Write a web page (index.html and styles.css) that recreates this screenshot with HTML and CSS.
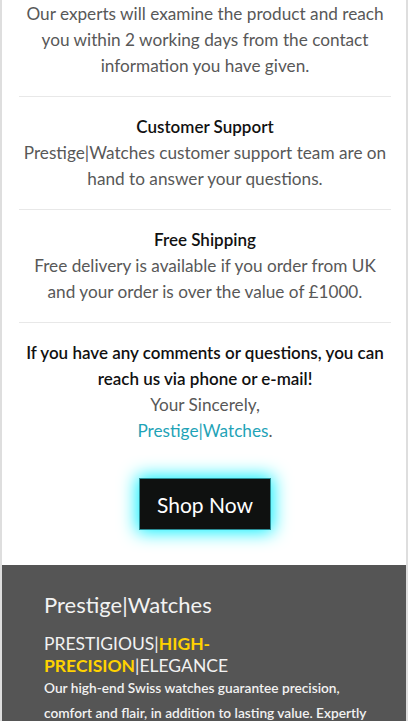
FILE: index.html
```html
<!DOCTYPE html>
<html lang="en">
<head>
<meta charset="utf-8">
<title>Prestige|Watches</title>
<link rel="stylesheet" href="styles.css">
</head>
<body>
<div class="page">
  <main class="content">
    <div class="item first">
      <p class="text">Our experts will examine the product and reach you within 2 working days from the contact information you have given.</p>
    </div>
    <div class="item">
      <h3 class="title">Customer Support</h3>
      <p class="text">Prestige|Watches customer support team are on hand to answer your questions.</p>
    </div>
    <div class="item">
      <h3 class="title">Free Shipping</h3>
      <p class="text">Free delivery is available if you order from UK and your order is over the value of £1000.</p>
    </div>
    <div class="item last">
      <p class="title">If you have any comments or questions, you can reach us via phone or e-mail!</p>
      <p class="text">Your Sincerely,<br><a class="brand-link" href="#">Prestige|Watches</a>.</p>
    </div>
    <div class="cta">
      <a class="shop-btn" href="#">Shop Now</a>
    </div>
  </main>
  <footer class="footer">
    <h2 class="footer-brand">Prestige|Watches</h2>
    <h3 class="footer-tagline">PRESTIGIOUS|<span class="hl">HIGH-PRECISION</span>|ELEGANCE</h3>
    <p class="footer-text">Our high-end Swiss watches guarantee precision, comfort and flair, in addition to lasting value. Expertly crafted by master watchmakers.</p>
  </footer>
</div>
</body>
</html>
```
FILE: styles.css
```css
* { box-sizing: border-box; }
html, body { margin: 0; padding: 0; background: #fff; }
body {
  font-family: Lato, "Open Sans", "Liberation Sans", sans-serif;
  overflow: hidden;
}
.page {
  width: 408px;
  border-left: 2px solid #dedede;
  border-right: 2px solid #dedede;
  min-height: 721px;
}
.content {
  padding: 0 15px 0 17px;
}
.item {
  padding: 17px 0;
  border-bottom: 1px solid #e8e8e8;
  text-align: center;
}
.item.first { padding-top: 1px; }
.item.last { border-bottom: none; padding-bottom: 0; }
.title {
  margin: 0;
  font-size: 17px;
  font-weight: 600;
  line-height: 26px;
  color: #111;
}
.text {
  margin: 0;
  font-size: 17.2px;
  line-height: 26px;
  color: #585858;
}
.brand-link {
  color: #1fa3b7;
  text-decoration: none;
}
.cta {
  display: flex;
  justify-content: center;
  padding: 34px 0 35px;
}
.shop-btn {
  display: flex;
  align-items: center;
  justify-content: center;
  width: 132px;
  height: 52px;
  background: #0f1110;
  color: #fff;
  font-size: 21px;
  text-decoration: none;
  border: 1px solid #2a8c95;
  box-shadow: 0 0 18px 2px #00f0ff;
}
.footer {
  background: #555;
  padding: 25px 28px 20px 42px;
  color: #f2f2f2;
}
.footer-brand {
  margin: 0 0 13px;
  font-size: 22px;
  font-weight: 400;
  line-height: 30px;
}
.footer-tagline {
  margin: 0;
  max-width: 300px;
  font-size: 17.5px;
  font-weight: 400;
  line-height: 22px;
}
.hl {
  color: #ffd200;
  font-weight: 700;
}
.footer-text {
  margin: -2px 0 0;
  font-size: 13.7px;
  font-weight: 600;
  line-height: 25px;
}
```
